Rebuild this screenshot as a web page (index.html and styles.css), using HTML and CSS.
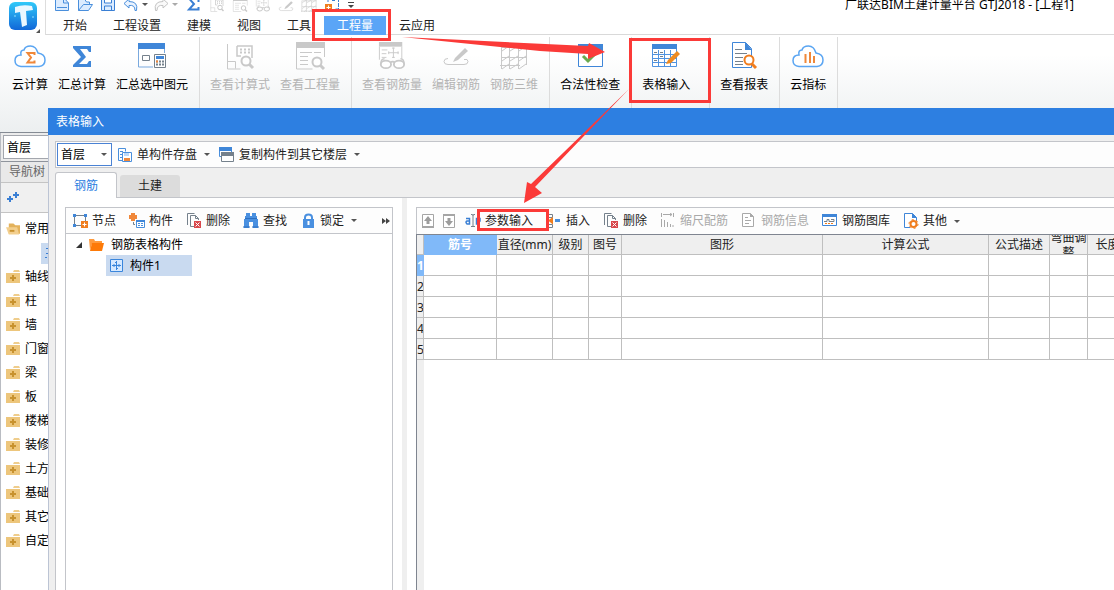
FILE: index.html
```html
<!DOCTYPE html>
<html lang="zh-CN">
<head>
<meta charset="utf-8">
<title>广联达BIM土建计量平台 GTJ2018</title>
<link rel="stylesheet" href="styles.css">
</head>
<body>
<svg class="defs" aria-hidden="true">
  <symbol id="plusfolder" viewBox="0 0 14 14"><path d="M8 0h5l1 2H7z" fill="#efcd8c"/><path d="M0 3h14v10H0z" fill="#edc67c"/><path d="M7 5v6M4 8h6" stroke="#c8922f" stroke-width="2"/></symbol>
  <symbol id="delete" viewBox="0 0 16 16"><path d="M1.500 12V.500h7M12.500 7V5.500L9.500 2.500h-5v11h4M9.500 2.500V5.500h3" fill="none" stroke="#75818c"/><path d="M8 8h7v7H8z" fill="#d9484c"/><path d="M9.500 9.500l4 4m0-4l-4 4" stroke="#fff"/></symbol>
  <symbol id="report" viewBox="0 0 32 28"><path d="M2 0h29v6H2z" fill="#c9c9c9"/><path d="M2.500 6v21h16M30.500 6v9M6 10.500h12M6 14.500h8M6 18.500h8M6 22.500h8M20 10.500h7" fill="none" stroke="#c9c9c9"/><circle cx="23" cy="20" r="4.500" fill="#fff" stroke="#c9c9c9" stroke-width="2"/><path d="M26 23l4 4" stroke="#c9c9c9" stroke-width="3"/></symbol>
  <symbol id="viewgrid" viewBox="0 0 32 28"><path d="M3.500 2v25h13M3.500 19.500h8v7" fill="none" stroke="#c9c9c9"/><path d="M13 4h15v12M13 4v10h4" fill="none" stroke="#c9c9c9" stroke-width="1.500"/><path d="M16 7.500h10M16 10.500h10" stroke="#c9c9c9" stroke-width="2" stroke-dasharray="2 2"/><circle cx="22" cy="19" r="4.500" fill="#fff" stroke="#c9c9c9" stroke-width="2"/><path d="M25 22l4 4" stroke="#c9c9c9" stroke-width="3"/></symbol>
  <symbol id="glasses" viewBox="0 0 32 30"><path d="M2 0h25v5H2z" fill="#c9c9c9"/><path d="M2.500 5v14M26.500 5v13M5 8.500h6M5 12.500h5M5 16.500h5M12 11.500h11M17.500 6v11M19 6.500h-3m0 10h3M12.500 10v3M22.500 10v3" fill="none" stroke="#c9c9c9"/><path d="M4 24Q4 18 8 18M29 24Q29 18 25 18" fill="none" stroke="#c9c9c9" stroke-width="1.500"/><ellipse cx="9.500" cy="24" rx="5.500" ry="4" fill="#fff" stroke="#c9c9c9" stroke-width="2"/><ellipse cx="23.500" cy="24" rx="5.500" ry="4" fill="#fff" stroke="#c9c9c9" stroke-width="2"/><path d="M14 22q3-2 5 0" fill="none" stroke="#c9c9c9" stroke-width="2"/></symbol>
  <symbol id="pen" viewBox="0 0 28 28"><path d="M6 16.500q-4 0-4 3t4 3h16q4 0 4-3t-4-2" fill="none" stroke="#c9c9c9"/><path d="M23 6l3 3-10 9-5 2 2-4z" fill="#c9c9c9"/></symbol>
  <symbol id="mesh" viewBox="0 0 28 28"><path d="M2 5.500h25M2 15.500h25M0 23.500h20M1.500 5v22M9.500 3v24M18.500 5v22M26.500 3v20M2 9l7-5M10 9l8-5M19 9l7-5M2 19l7-5M10 19l8-5M19 19l7-5M2 27l7-5M10 27l8-5M19 27l7-5" fill="none" stroke="#c9c9c9"/></symbol>
</svg>

<div class="app">
  <header class="header">
    <div class="logo">
      <svg width="40" height="34" viewBox="0 0 40 34"><defs><linearGradient id="lg" x1="0" y1="0" x2="0" y2="1"><stop offset="0" stop-color="#31c9f9"/><stop offset="1" stop-color="#1167d8"/></linearGradient></defs><rect x="9" y="2" width="28" height="28" rx="6" fill="url(#lg)"/><path d="M15 7q8-3 17-1l1 4-7 1 1 14-5 2-2-15-5 1z" fill="#eaf7ff"/><path d="M14 16h2M32 17h2" stroke="#8fe0ff"/><path d="M40 29v4h-4z" fill="#555"/></svg>
    </div>
    <div class="headmain">
      <div class="quick">
        <svg width="16" height="12" viewBox="0 4 16 12"><path d="M1.500 2v12.500h13V7L10 2zM9.500 2v5h5M3 11.500h10" fill="#dcecff" stroke="#4a8fdc"/></svg>
        <svg width="16" height="12" viewBox="0 4 16 12"><path d="M1.500 14.500V3h6l2 3h3v3M1.500 14.500l5-6h9l-4 6z" fill="#dcecff" stroke="#4a8fdc"/></svg>
        <svg width="16" height="12" viewBox="0 4 16 12"><path d="M1.500 1.500h13v13h-13zM4.500 2v5h7V2M4.500 14v-4h7v4" fill="#dcecff" stroke="#3a7fd4"/></svg>
        <svg width="16" height="12" viewBox="0 4 16 12"><path d="M6 3L1 7.500 6 12V9.500q6-1 6 5h1.500q2-9-7.500-9z" fill="#eaf3ff" stroke="#4a8fdc"/></svg>
        <i class="caret"></i>
        <svg width="16" height="12" viewBox="0 4 16 12"><path d="M10 3l5 4.500-5 4.500V9.500q-6-1-6 5H2.500q-2-9 7.500-9z" fill="#fafafa" stroke="#c4c4c4"/></svg>
        <i class="caret pale"></i>
        <svg class="sum" width="16" height="12" viewBox="0 4 16 12"><path d="M12.500 6V3h-9L8 8l-5 5.500h9.500V11" fill="none" stroke="#3a7fd4" stroke-width="2"/></svg>
        <svg width="16" height="12" viewBox="0 4 32 24"><use href="#viewgrid" width="32" height="28"/></svg>
        <svg width="16" height="12" viewBox="0 4 32 24"><use href="#report" width="32" height="28"/></svg>
        <svg width="16" height="12" viewBox="0 6 32 24"><use href="#glasses" width="32" height="30"/></svg>
        <svg width="16" height="12" viewBox="0 4 28 21"><use href="#pen" width="28" height="28"/></svg>
        <svg width="16" height="12" viewBox="0 4 28 21"><use href="#mesh" width="28" height="28"/></svg>
        <svg width="16" height="12" viewBox="0 4 16 12"><path d="M4 2v4M8 4.500h3M14.500 2v11h-4" fill="none" stroke="#3a7fd4" stroke-dasharray="4 1"/><path d="M1 8h7v7H1z" fill="#f07d1e"/><path d="M4.500 9.500v4M2.500 11.500h4" stroke="#fff"/></svg>
        <svg width="8" height="12" viewBox="0 0 8 12"><path d="M1 2.500h6" stroke="#444"/><path d="M1 5h6L4 8z" fill="#444"/></svg>
        <span class="apptitle">广联达BIM土建计量平台 GTJ2018 - [工程1]</span>
      </div>
      <nav class="tabs">
        <button>开始</button><button>工程设置</button><button>建模</button><button>视图</button><button>工具</button><button class="on">工程量</button><button>云应用</button>
      </nav>
    </div>
  </header>

  <section class="ribbon">
    <div class="group first">
      <button><svg width="32" height="28" viewBox="0 0 32 28"><path d="M7 24.500Q1 24 1 18.500T7 13Q6 8 10 8 11 4 16.500 4T24 11q7 1 7 7t-6 6.500z" fill="#fff" stroke="#5aa5f2" stroke-width="1.500"/><path d="M20.500 13v-2h-7l3.500 4.500-3.500 5h7v-2" fill="none" stroke="#f0883a" stroke-width="2"/></svg>云计算</button>
      <button><svg width="32" height="28" viewBox="0 0 32 28"><path d="M7 4h18v6h-2l-2-3h-7l6 8-7 7h8l2-3h2v6H7v-2l8-8-8-9z" fill="#3f86d8"/></svg>汇总计算</button>
      <button><svg width="32" height="28" viewBox="0 0 32 28"><path d="M2 1h27v6H2z" fill="#3f86d8"/><path d="M2.500 7v18H17M28.500 7v4" fill="none" stroke="#7aa9de"/><path d="M6.500 13.500h7v5h-7z" fill="none" stroke="#75818c"/><path d="M18.500 12.500h11v13h-11z" fill="#fff" stroke="#75818c"/><path d="M20 14h8v3h-8z" fill="#3f86d8"/><path d="M20 19.500h8M20 22.500h8" stroke="#75818c" stroke-width="2" stroke-dasharray="2 1"/><path d="M20 18.500h2v2h-2z" fill="#f0883a"/></svg>汇总选中图元</button>
    </div>
    <div class="group">
      <button disabled><svg width="32" height="28"><use href="#viewgrid"/></svg>查看计算式</button>
      <button disabled><svg width="32" height="28"><use href="#report"/></svg>查看工程量</button>
    </div>
    <div class="group">
      <button disabled><svg width="32" height="28"><use href="#glasses"/></svg>查看钢筋量</button>
      <button disabled><svg width="28" height="28"><use href="#pen"/></svg>编辑钢筋</button>
      <button disabled><svg width="28" height="28"><use href="#mesh"/></svg>钢筋三维</button>
    </div>
    <div class="group">
      <button><svg width="32" height="28" viewBox="0 0 32 28"><path d="M4.500 4.500h24v20h-24z" fill="#fff" stroke="#3f86d8"/><path d="M4 2h25v6H4z" fill="#3f86d8"/><path d="M9 14l5 5 8-8" fill="none" stroke="#6aaa4e" stroke-width="3"/></svg>合法性检查</button>
    </div>
    <div class="group roomy">
      <button><svg width="32" height="28" viewBox="0 0 32 28"><path d="M2.500 4.500h24v20h-24zM2 12.500h24M2 16.500h24M2 20.500h24M8.500 8v16M14.500 8v16M20.500 8v16" fill="#fff" stroke="#4f93e0"/><path d="M2 2h25v5H2z" fill="#3f86d8"/><path d="M4 10.500h3M10 10.500h3M4 18.500h3M10 14.500h3" stroke="#75818c"/><path d="M27 9l3 3-9 9-5 1 2-4z" fill="#ee8b20"/></svg>表格输入</button>
    </div>
    <div class="group">
      <button><svg width="32" height="28" viewBox="0 0 32 28"><path d="M4.500.500h13l6 6v19h-19z" fill="#fff" stroke="#3f86d8"/><path d="M17 0v8h7z" fill="#3f86d8"/><path d="M7 7.500h7M7 11.500h12M7 15.500h8M7 19.500h8M7 22.500h8" stroke="#75818c"/><circle cx="21" cy="18" r="4.500" fill="#fff" stroke="#f07d1e" stroke-width="2"/><path d="M24 22l4 4" stroke="#f07d1e" stroke-width="3"/></svg>查看报表</button>
    </div>
    <div class="group">
      <button><svg width="32" height="28" viewBox="0 0 32 28"><path d="M7 24.500Q1 24 1 18.500T7 13Q6 8 10 8 11 4 16.500 4T24 11q7 1 7 7t-6 6.500z" fill="#fff" stroke="#5aa5f2" stroke-width="1.500"/><path d="M13.500 12v9M18 10v11M22 14v7" stroke="#f0883a" stroke-width="2"/></svg>云指标</button>
    </div>
  </section>

  <aside class="nav">
    <div class="floorbox"><input class="floor" aria-label="楼层" value="首层"></div>
    <div class="navtitle">导航树</div>
    <div class="navtools"><svg width="14" height="14" viewBox="0 0 14 14"><path d="M4 6v6M1 9h6M10 2v6M7 5h6" stroke="#3a7fd4" stroke-width="2"/></svg></div>
    <ul class="navlist">
      <li><svg width="14" height="14" viewBox="0 0 15 14"><path d="M3 1h5l2 2h5v9H3z" fill="#e3b25c"/><path d="M0 5h12l2 8H3z" fill="#f3cf8e"/><path d="M4 9h5" stroke="#c8922f" stroke-width="2"/></svg>常用</li>
      <li class="sub"><span><svg width="14" height="14" viewBox="0 0 14 14"><path d="M5 2.500h9M5 7.500h9M4 11.500h9" stroke="#3a7fd4" stroke-dasharray="2 1"/></svg></span></li>
      <li><svg width="14" height="14"><use href="#plusfolder"/></svg>轴线</li>
      <li><svg width="14" height="14"><use href="#plusfolder"/></svg>柱</li>
      <li><svg width="14" height="14"><use href="#plusfolder"/></svg>墙</li>
      <li><svg width="14" height="14"><use href="#plusfolder"/></svg>门窗</li>
      <li><svg width="14" height="14"><use href="#plusfolder"/></svg>梁</li>
      <li><svg width="14" height="14"><use href="#plusfolder"/></svg>板</li>
      <li><svg width="14" height="14"><use href="#plusfolder"/></svg>楼梯</li>
      <li><svg width="14" height="14"><use href="#plusfolder"/></svg>装修</li>
      <li><svg width="14" height="14"><use href="#plusfolder"/></svg>土方</li>
      <li><svg width="14" height="14"><use href="#plusfolder"/></svg>基础</li>
      <li><svg width="14" height="14"><use href="#plusfolder"/></svg>其它</li>
      <li><svg width="14" height="14"><use href="#plusfolder"/></svg>自定</li>
    </ul>
  </aside>

  <section class="dialog">
    <h1 class="dlgtitle">表格输入</h1>
    <div class="dlgbody">
      <div class="bar main">
        <span class="combo"><select aria-label="楼层选择"><option>首层</option></select><i class="caret"></i></span>
        <button class="btn drop"><svg width="16" height="16" viewBox="0 0 16 16"><path d="M6 13.500H1.500v-12h7v3M3 4.500h3M3 7.500h2M3 10.500h2" fill="none" stroke="#4a8fdc"/><path d="M5.500 5.500h9v9h-9z" fill="#fff" stroke="#4a8fdc"/><path d="M7 6h5v3H7z" fill="#bcd8f7"/><path d="M7 11h6v3H7z" fill="#f0883a"/></svg>单构件存盘<i class="caret"></i></button>
        <button class="btn drop"><svg width="16" height="16" viewBox="0 0 16 16"><path d="M.500.500h12v9H.500z" fill="#fff" stroke="#4a8fdc"/><path d="M0 0h13v4H0z" fill="#3f86d8"/><path d="M2.500 6.500h12v8h-12z" fill="#fff" stroke="#75818c"/><path d="M2 5h13v4H2z" fill="#75818c"/></svg>复制构件到其它楼层<i class="caret"></i></button>
      </div>
      <div class="dlgtabs"><button class="on">钢筋</button><button>土建</button></div>
      <div class="page">
        <div class="left">
          <div class="pane">
            <div class="bar">
              <button class="btn"><svg width="16" height="16" viewBox="0 0 16 16"><path d="M2.500 2.500h11v10h-11z" fill="none" stroke="#75818c"/><path d="M1 1h3v3H1zM12 1h3v3h-3zM1 11h3v3H1z" fill="#3f86d8"/><path d="M9 8h7v7H9z" fill="#f07d1e"/><path d="M12.500 9.500v4M10.500 11.500h4" stroke="#fff"/></svg>节点</button>
              <button class="btn"><svg width="16" height="16" viewBox="0 0 16 16"><path d="M4 0v8M0 4h8" stroke="#f0883a" stroke-width="4"/><path d="M7.500 7.500h8v7h-8z" fill="#fff" stroke="#4a8fdc"/><path d="M7 7h9v2H7z" fill="#3f86d8"/><path d="M9 10.500h5M9 12.500h5" stroke="#4a8fdc" stroke-dasharray="2 1"/><path d="M4.500 9v2.500H6" fill="none" stroke="#75818c"/></svg>构件</button>
              <button class="btn"><svg width="16" height="16"><use href="#delete"/></svg>删除</button>
              <button class="btn"><svg width="16" height="16" viewBox="0 0 16 16"><path d="M3 0h4v3h2V0h4v3h1v3h1v9h-5V9H6v6H1V6h1V3h1z" fill="#4a90e0"/><path d="M2 5.500h12M0 14h7M9 14h7" stroke="#2c6fc0"/></svg>查找</button>
              <button class="btn drop"><svg width="16" height="16" viewBox="0 0 16 16"><path d="M5 7V4.500q0-3 3.500-3t3.500 3V7" fill="none" stroke="#4a90e0" stroke-width="2"/><path d="M3 6h11v9H3z" fill="#4a90e0"/><path d="M8.500 8v4" stroke="#fff" stroke-width="2"/></svg>锁定<i class="caret"></i></button>
              <button class="more" aria-label="更多"><svg width="8" height="6" viewBox="0 0 8 6"><path d="M0 0l4 3-4 3zM4 0l4 3-4 3z" fill="#444"/></svg></button>
            </div>
            <ul class="tree">
              <li class="root"><svg width="6" height="6" viewBox="0 0 6 6"><path d="M6 0v6H0z" fill="#333"/></svg><svg width="15" height="14" viewBox="0 0 15 14"><path d="M0 1h5l1 2h7v3H3L1 12z" fill="#ff9b3d"/><path d="M3 5h12l-2 8H1z" fill="#fd7a08"/></svg>钢筋表格构件</li>
              <li class="leaf"><svg width="14" height="14" viewBox="0 0 14 14"><path d="M.500.500h12v12H.500z" fill="#d6e9ff" stroke="#3a86dc"/><path d="M2 6.500h9M6.500 2v9M4 5v3M9 5v3M5 3.500h2M6 9.500h2" fill="none" stroke="#3a86dc"/></svg>构件1</li>
            </ul>
          </div>
        </div>
        <div class="split"></div>
        <div class="right">
          <div class="bar">
            <button class="iconbtn" aria-label="上移"><svg width="14" height="14" viewBox="0 0 14 14"><path d="M1.500.500h11v12h-11z" fill="#fff" stroke="#a5a5a5"/><path d="M1 13h12" stroke="#a5a5a5" stroke-width="2"/><path d="M7 2l4 5H8.500v3h-3V7H3z" fill="#9c9c9c"/></svg></button>
            <button class="iconbtn" aria-label="下移"><svg width="14" height="14" viewBox="0 0 14 14"><path d="M1.500 1.500h11v12h-11z" fill="#fff" stroke="#a5a5a5"/><path d="M1 1h12" stroke="#a5a5a5" stroke-width="2"/><path d="M7 12l4-5H8.500V4h-3v3H3z" fill="#9c9c9c"/></svg></button>
            <button class="btn"><svg width="16" height="16" viewBox="0 0 16 16"><path d="M1 5.500h3.500V11H2Q0 9 2 8h2M11.500 8H15V5.500h-3.500V11H15" fill="none" stroke="#3a7fd4" stroke-width="1.500"/><path d="M6 1.500h1.500l.500 1 .500-1H10M8 2v11M6 13.500h4" fill="none" stroke="#75818c"/></svg>参数输入</button>
            <button class="btn"><svg width="16" height="16" viewBox="0 0 16 16"><path d="M1.500 1.500h5v3h-5zM1.500 11.500h5v3h-5z" fill="#fff" stroke="#75818c"/><path d="M9 7.500h5" stroke="#4a8fdc" stroke-width="3"/><path d="M7 4L2 7.500l5 4z" fill="#f07d1e"/></svg>插入</button>
            <button class="btn"><svg width="16" height="16"><use href="#delete"/></svg>删除</button>
            <button class="btn" disabled><svg width="16" height="16" viewBox="0 0 16 16"><path d="M1.500 0v4M13.500 0v4M3 1.500h9M10 0l2 1.500L10 3M1.500 6v8M4.500 7v7M7.500 9v5M10.500 11v3M13 12v2" fill="none" stroke="#a9a9a9"/></svg>缩尺配筋</button>
            <button class="btn" disabled><svg width="16" height="16" viewBox="0 0 16 16"><path d="M1.500.500h8l3 3v10h-11z" fill="#fff" stroke="#a9a9a9"/><path d="M9 0v4h4z" fill="#a9a9a9"/><path d="M4 4.500h3M4 7.500h6M4 10.500h4" stroke="#a9a9a9"/></svg>钢筋信息</button>
            <button class="btn"><svg width="16" height="16" viewBox="0 0 16 16"><path d="M.500 1.500h14v11H.500z" fill="#fff" stroke="#3f86d8"/><path d="M0 1h15v3H0z" fill="#3f86d8"/><path d="M2 8.500h3V6.500h2v2h5v-2H9" fill="none" stroke="#75818c"/><path d="M3 10.500h9" stroke="#f07d1e" stroke-dasharray="2 1"/></svg>钢筋图库</button>
            <button class="btn drop"><svg width="16" height="16" viewBox="0 0 16 16"><path d="M7 14.500H1.500V.500h8l4 4V8" fill="#fff" stroke="#3f86d8"/><path d="M9 0v5h5z" fill="#3f86d8"/><circle cx="10.500" cy="11" r="3" fill="#fff" stroke="#f07d1e" stroke-width="2"/><circle cx="10.500" cy="11" r="4.500" fill="none" stroke="#f07d1e" stroke-dasharray="2 2.700"/></svg>其他<i class="caret"></i></button>
          </div>
          <div class="gridbox">
            <table class="grid">
              <colgroup><col class="c0"><col class="c1"><col class="c2"><col class="c3"><col class="c4"><col class="c5"><col class="c6"><col class="c7"><col class="c8"><col class="c9"></colgroup>
              <thead><tr><th></th><th class="sel"><div>筋号</div></th><th><div class="one">直径(mm)</div></th><th><div>级别</div></th><th><div>图号</div></th><th><div>图形</div></th><th><div>计算公式</div></th><th><div>公式描述</div></th><th><div>弯曲调整</div></th><th><div>长度</div></th></tr></thead>
              <tbody>
                <tr><th class="sel"><div>1</div></th><td></td><td></td><td></td><td></td><td></td><td></td><td></td><td></td><td></td></tr>
                <tr><th><div>2</div></th><td></td><td></td><td></td><td></td><td></td><td></td><td></td><td></td><td></td></tr>
                <tr><th><div>3</div></th><td></td><td></td><td></td><td></td><td></td><td></td><td></td><td></td><td></td></tr>
                <tr><th><div>4</div></th><td></td><td></td><td></td><td></td><td></td><td></td><td></td><td></td><td></td></tr>
                <tr><th><div>5</div></th><td></td><td></td><td></td><td></td><td></td><td></td><td></td><td></td><td></td></tr>
              </tbody>
            </table>
          </div>
        </div>
      </div>
    </div>
  </section>

  <svg class="marks" width="1114" height="590" viewBox="0 0 1114 590" aria-hidden="true">
    <g fill="none" stroke="#fb3a38" stroke-width="3"><path d="M313.500 10.500h76v29h-76zM630.500 39.500h79v62h-79zM478.500 210.500h69v19h-69z"/></g>
    <path d="M402 37L588 46 589 43 605 52 588 59 588 54 540 51z" fill="#fb3a38"/>
    <path d="M629 89L535 187 542 193 524 203 527 182 531 184z" fill="#fb3a38"/>
  </svg>
</div>
</body>
</html>
```

FILE: styles.css
```css
* { box-sizing: border-box; }
body {
  margin: 0;
  font: 12px/16px "Noto Sans", "Noto Sans CJK SC", sans-serif;
  color: #222;
  background: #fff;
}
button, input, select { font: inherit; color: inherit; }
button { margin: 0; padding: 0; border: 0; background: none; white-space: nowrap; }
ul { margin: 0; padding: 0; list-style: none; }
svg { display: block; flex: none; }
.defs { position: absolute; width: 0; height: 0; }

.app {
  position: relative;
  height: 100vh;
  overflow: hidden;
  display: flex;
  flex-direction: column;
}
.caret {
  flex: none;
  width: 6px;
  border: 3px solid transparent;
  border-top-color: #555;
  border-bottom: 0;
}
.caret.pale { border-top-color: #aaa; }

/* Window header */
.header { display: flex; flex: none; height: 35px; }
.logo { flex: none; width: 46px; border-right: 1px solid #ddd; }
.headmain { flex: 1; min-width: 0; border-bottom: 1px solid #d9d9d9; }
.quick { display: flex; align-items: flex-start; height: 16px; padding-left: 8px; gap: 7px; }
.quick .caret { margin: 3px -2px 0 -4px; }
.quick .sum { margin-left: 3px; }
.apptitle { margin-left: auto; padding-right: 40px; line-height: 10px; color: #000; white-space: nowrap; }
.tabs { display: flex; padding-left: 4px; }
.tabs button { height: 19px; padding: 0 13px; }
.tabs .on { background: #5aa5f7; color: #fff; }

/* Ribbon */
.ribbon {
  display: flex;
  flex: none;
  height: 98px;
  padding-top: 2px;
  background: linear-gradient(#fff 20%, #eceff0);
  border-bottom: 1px solid #858b94;
}
.group { display: flex; gap: 10px; padding: 5px 11px 0 10px; border-right: 1px solid #dcdcdc; }
.group.first { padding-left: 12px; }
.group.roomy { padding-right: 19px; }
.group button { display: flex; flex-direction: column; align-items: center; justify-content: flex-start; gap: 7px; height: 54px; color: #000; }
.group button:disabled { color: #b4b4b4; }

/* Navigation column */
.nav { flex: 1; width: 180px; border-left: 1px solid #b9bcc2; background: #fff; }
.floorbox { height: 29px; padding: 2px; background: #ececec; border-bottom: 1px solid #8f949c; }
.floor { width: 100%; height: 24px; padding: 0 3px; border: 1px solid #a3a6ad; background: #fff; color: #000; }
.navtitle { height: 21px; padding: 2px 8px; background: #e9e9e9; border-bottom: 1px solid #c4c4c4; color: #666; }
.navtools { height: 30px; padding: 7px 5px; background: #f0f0f0; border-bottom: 1px solid #c4c4c4; }
.navlist { padding-top: 4px; color: #000; }
.navlist li { display: flex; align-items: center; gap: 5px; height: 24px; padding-left: 5px; white-space: nowrap; }
.navlist .sub { padding-left: 40px; }
.sub span { width: 100px; height: 21px; padding-top: 3px; background: #c9daf0; }

/* Table input window */
.dialog {
  position: absolute;
  inset: 108px 0 0 48px;
  display: flex;
  flex-direction: column;
  background: #efefef;
  border-left: 1px solid #bcc4d4;
}
.dlgtitle { flex: none; margin: 0 0 0 -1px; padding: 6px 8px 5px; background: #2d7fe1; color: #fff; font-size: 12px; font-weight: 400; line-height: 16px; }
.dlgbody { flex: 1; min-height: 0; display: flex; flex-direction: column; padding: 6px 0 0 6px; }
.bar { display: flex; align-items: center; flex: none; height: 26px; padding-left: 4px; background: #fdfdfd; border-bottom: 1px solid #c3c5ca; }
.bar.main { height: 27px; padding-left: 1px; border: 1px solid #c3c5ca; border-right: 0; }
.btn { display: flex; align-items: center; gap: 4px; height: 20px; padding: 0 11px 0 2px; }
.btn.drop { padding-right: 7px; }
.btn .caret { margin-left: 3px; }
.btn:disabled { color: #a9a9a9; }
.iconbtn { padding-right: 7px; }
.more { margin-left: auto; padding: 0 2px; }
.combo { position: relative; margin-right: 3px; }
.combo select { display: block; appearance: none; width: 55px; height: 23px; padding: 0 3px; border: 1px solid #4a82d4; border-radius: 0; background: #fff; color: #000; }
.combo .caret { position: absolute; right: 5px; top: 10px; pointer-events: none; }

.dlgtabs { display: flex; align-items: flex-end; gap: 3px; height: 29px; padding-top: 4px; }
.dlgtabs button { width: 60px; height: 22px; background: #dcdcdc; border-radius: 3px 3px 0 0; }
.dlgtabs .on { position: relative; width: 62px; height: 26px; margin-bottom: -1px; background: #fff; border: 1px solid #c3c5ca; border-bottom: 0; color: #2b7de0; }

.page { flex: 1; min-height: 0; display: flex; background: #fff; border: 1px solid #c3c5ca; border-width: 1px 0 0 1px; }
.left { flex: none; width: 346px; padding: 9px 9px 0 9px; display: flex; }
.pane { flex: 1; border: 1px solid #c3c5ca; border-bottom: 0; }
.split { flex: none; width: 5px; background: #efefef; }
.right { flex: 1; min-width: 0; display: flex; flex-direction: column; padding: 9px 0 0 9px; }
.right .bar { border: 1px solid #c3c5ca; border-width: 1px 0 0 1px; height: 27px; }
.tree { color: #000; }
.tree li { display: flex; align-items: center; height: 21px; }
.root { padding-left: 10px; gap: 7px; }
.leaf { width: 86px; margin-left: 40px; padding-left: 4px; gap: 6px; background: #c9daf0; }

/* Rebar grid */
.gridbox { flex: 1; overflow: hidden; border: 1px solid #7f8590; border-width: 1px 0 0 1px; background: linear-gradient(90deg, #efefef 7px, #fff 7px); }
.grid { width: 711px; table-layout: fixed; border-collapse: separate; border-spacing: 0; }
.grid th, .grid td { height: 21px; padding: 0; border: 1px solid #bfbfbf; border-width: 0 1px 1px 0; font-weight: 400; background: #fff; }
.grid th { background: #efefef; }
.grid thead th { height: 20px; }
.grid th div { display: flex; align-items: center; justify-content: center; height: 19px; line-height: 15px; overflow: hidden; text-align: center; }
.grid tbody th div { justify-content: flex-start; }
.grid .one { white-space: nowrap; }
.grid th.sel { background: #80b9f9; border-color: #80b9f9; color: #fff; font-weight: 700; }
.c0 { width: 7px; } .c1 { width: 73px; } .c2 { width: 56px; } .c3 { width: 36px; }
.c4 { width: 33px; } .c5 { width: 201px; } .c6 { width: 166px; } .c7 { width: 61px; }
.c8 { width: 38px; } .c9 { width: 40px; }

/* Callouts drawn over the windows */
.marks { position: absolute; left: 0; top: 0; pointer-events: none; }
```
